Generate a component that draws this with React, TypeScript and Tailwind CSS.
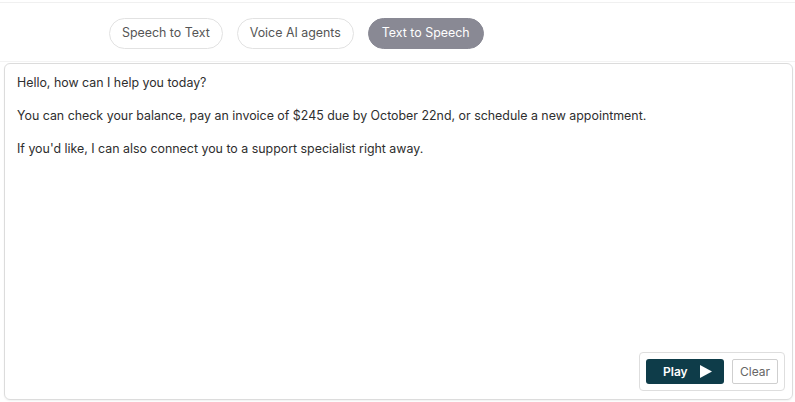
import { useState } from "react";

const tabs = ["Speech to Text", "Voice AI agents", "Text to Speech"];

export default function App() {
  const [active, setActive] = useState("Text to Speech");

  return (
    <div className="w-[795px] h-[402px] bg-white font-['Inter',sans-serif] text-[#333] overflow-hidden">
      <div className="h-[3px] border-b border-[#f0f0f0]" />
      <div className="flex gap-[14px] pl-[109px] pt-[15px] pb-[12px] border-b border-[#f3f3f3]">
        {tabs.map((t) => (
          <button
            key={t}
            onClick={() => setActive(t)}
            className={
              t === active
                ? "h-[31px] px-[13px] rounded-full bg-[#898994] text-white text-[12.4px] border border-[#898994]"
                : "h-[31px] px-[12px] rounded-full bg-white text-[#555] text-[12.4px] border border-[#e2e2e2]"
            }
          >
            {t}
          </button>
        ))}
      </div>
      <div className="ml-[4px] mr-[2px] mt-[1px] h-[337px] rounded-[6px] border border-[#dcdcdc] shadow-[0_1px_2px_rgba(0,0,0,0.06)] flex flex-col">
        <div className="flex-1 px-[12px] pt-[9px] text-[12.4px] leading-[20px] text-[#2e2e2e] flex flex-col gap-[13px]">
          <p>Hello, how can I help you today?</p>
          <p>You can check your balance, pay an invoice of $245 due by October 22nd, or schedule a new appointment.</p>
          <p>If you'd like, I can also connect you to a support specialist right away.</p>
        </div>
        <div className="flex justify-end pr-[7px] pb-[8px]">
          <div className="flex gap-[8px] items-center p-[6px] border border-[#dedede] rounded-[4px]">
            <button className="h-[25px] w-[78px] bg-[#0e3c49] text-white rounded-[3px] flex items-center justify-between pl-[17px] pr-[12px] text-[12px] font-semibold">
              Play
              <svg width="12" height="13" viewBox="0 0 12 13"><path d="M0 0 L12 6.5 L0 13 Z" fill="white" /></svg>
            </button>
            <button className="h-[25px] w-[46px] bg-white text-[#666] border border-[#cfcfcf] rounded-[2px] text-[12px]">
              Clear
            </button>
          </div>
        </div>
      </div>
    </div>
  );
}
